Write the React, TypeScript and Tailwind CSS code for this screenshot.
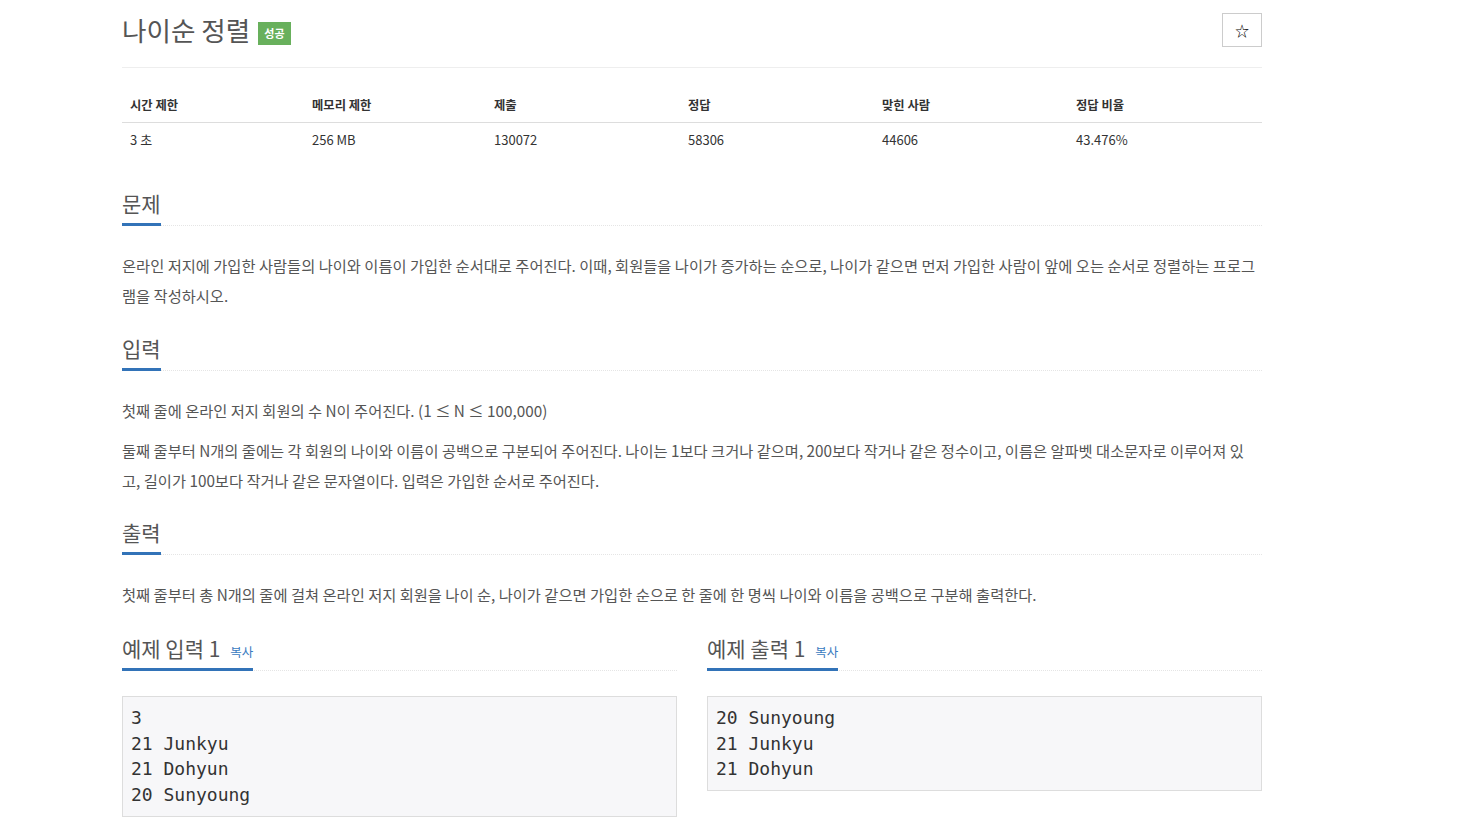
import React from "react"

const font = "font-['Noto_Sans_CJK_KR','Noto_Sans',sans-serif]"
const mono = "font-['DejaVu_Sans_Mono','Liberation_Mono',monospace]"

const stats = [
  { label: "시간 제한", value: "3 초" },
  { label: "메모리 제한", value: "256 MB" },
  { label: "제출", value: "130072" },
  { label: "정답", value: "58306" },
  { label: "맞힌 사람", value: "44606" },
  { label: "정답 비율", value: "43.476%" },
]

const Headline = ({ title, copy }: { title: string; copy?: boolean }) => (
  <div className="flex border-b border-dotted border-[#e5e5e5]">
    <h2 className="-mb-px flex items-baseline gap-[10px] border-b-[3px] border-[#3273b8] pb-[5px] text-[21px] leading-[30px] font-normal text-[#555]">
      {title}
      {copy && <span className="text-[12.5px] leading-none text-[#3a7bbf]">복사</span>}
    </h2>
  </div>
)

const Sample = ({ title, lines }: { title: string; lines: string[] }) => (
  <div className="flex flex-col">
    <Headline title={title} copy />
    <pre
      className={`mt-[25px] border border-[#ddd] bg-[#f7f7f9] px-2 py-[8px] text-[18px] leading-[25.7px] text-[#333] ${mono}`}
    >
      {lines.join("\n")}
    </pre>
  </div>
)

export default function App() {
  return (
    <div className={`min-h-[834px] bg-white ${font}`}>
      <div className="mx-auto w-[1140px] -translate-x-[48px] pt-[13px]">
        <div className="flex items-start justify-between border-b border-[#eee] pb-[20px]">
          <div className="flex items-center gap-2 pt-[2px]">
            <h1 className="text-[26.6px] leading-[30px] font-normal text-[#555]">나이순 정렬</h1>
            <span className="mt-[7px] bg-[#68b05c] px-[6px] py-[4px] text-[11px] leading-[15px] font-bold text-white">
              성공
            </span>
          </div>
          <button className="flex h-[34px] w-[40px] items-center justify-center border border-[#ccc] bg-white text-[14px] text-black">
            ☆
          </button>
        </div>

        <div className="mt-[28px] grid grid-cols-[182px_182px_194px_194px_194px_1fr] text-[#333]">
          {stats.map((s) => (
            <div key={s.label} className="border-b border-[#ddd] px-2 pb-[8px] text-[12.3px] font-bold leading-[18px]">
              {s.label}
            </div>
          ))}
          {stats.map((s) => (
            <div key={s.label + "v"} className="px-2 pt-[8px] text-[13px] leading-[18px]">
              {s.value}
            </div>
          ))}
        </div>

        <section className="mt-[39px]">
          <Headline title="문제" />
          <div className="mt-[24px] text-[15.3px] leading-[30px] break-all text-[#555]">
            <p>
              온라인 저지에 가입한 사람들의 나이와 이름이 가입한 순서대로 주어진다. 이때, 회원들을 나이가 증가하는 순으로,
              나이가 같으면 먼저 가입한 사람이 앞에 오는 순서로 정렬하는 프로그램을 작성하시오.
            </p>
          </div>
        </section>

        <section className="mt-[23px]">
          <Headline title="입력" />
          <div className="mt-[24px] flex flex-col gap-[10px] text-[15.3px] leading-[30px] break-all text-[#555]">
            <p>첫째 줄에 온라인 저지 회원의 수 N이 주어진다. (1 ≤ N ≤ 100,000)</p>
            <p>
              둘째 줄부터 N개의 줄에는 각 회원의 나이와 이름이 공백으로 구분되어 주어진다. 나이는 1보다 크거나 같으며, 200보다
              작거나 같은 정수이고, 이름은 알파벳 대소문자로 이루어져 있고, 길이가 100보다 작거나 같은 문자열이다. 입력은 가입한
              순서로 주어진다.
            </p>
          </div>
        </section>

        <section className="mt-[22px]">
          <Headline title="출력" />
          <div className="mt-[24px] text-[15.3px] leading-[30px] break-all text-[#555]">
            <p>
              첫째 줄부터 총 N개의 줄에 걸쳐 온라인 저지 회원을 나이 순, 나이가 같으면 가입한 순으로 한 줄에 한 명씩 나이와 이름을
              공백으로 구분해 출력한다.
            </p>
          </div>
        </section>

        <div className="mt-[24px] grid grid-cols-2 gap-[30px]">
          <Sample title="예제 입력 1" lines={["3", "21 Junkyu", "21 Dohyun", "20 Sunyoung"]} />
          <Sample title="예제 출력 1" lines={["20 Sunyoung", "21 Junkyu", "21 Dohyun"]} />
        </div>
      </div>
    </div>
  )
}
